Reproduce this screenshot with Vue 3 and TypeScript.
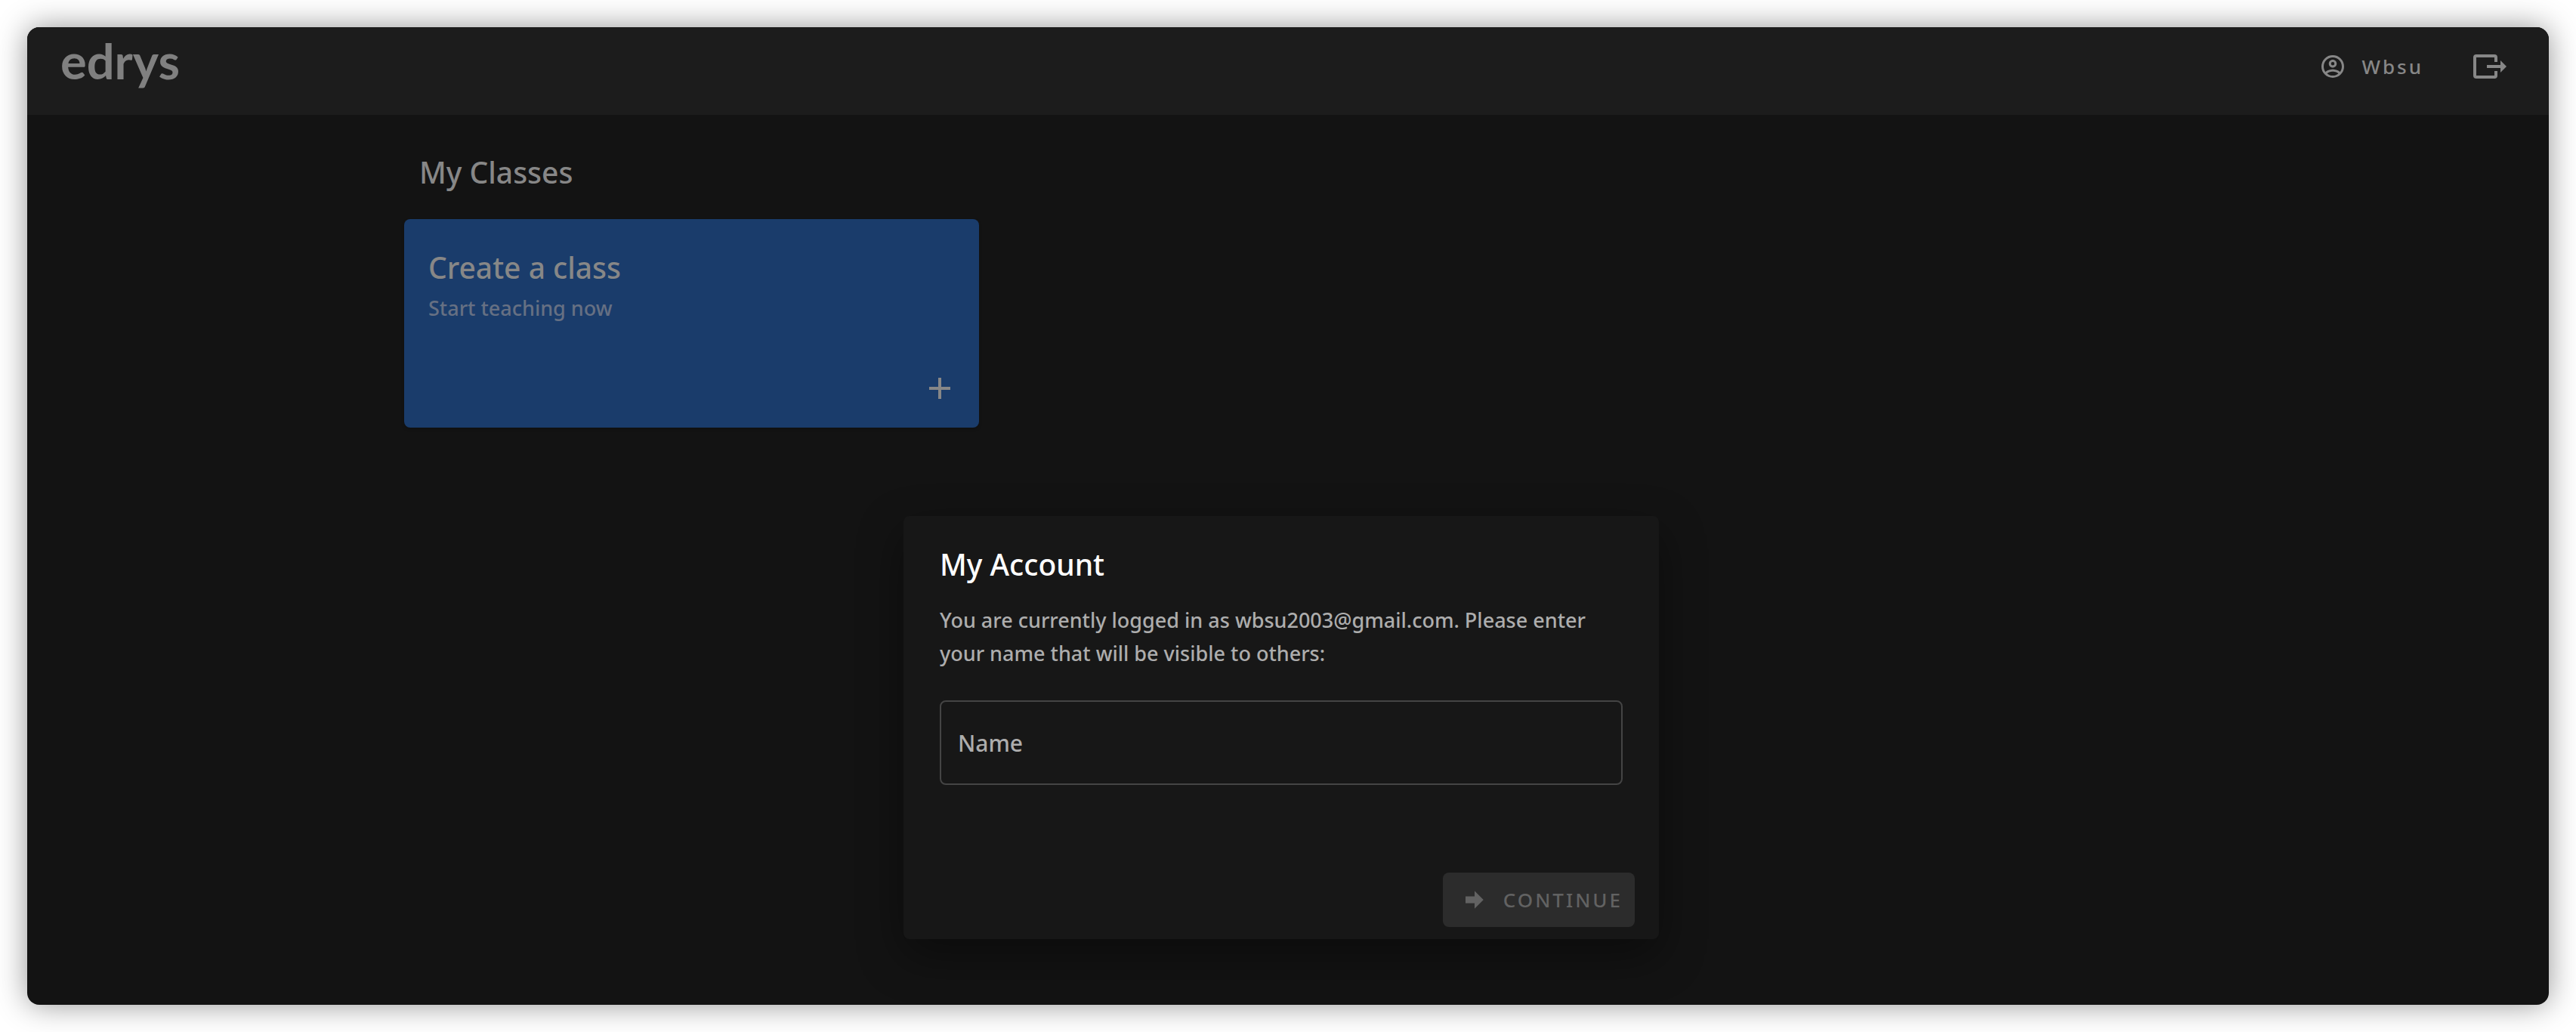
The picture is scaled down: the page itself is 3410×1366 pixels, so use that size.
<script setup lang="ts">
import { ref } from 'vue'

const user = 'Wbsu'
const email = 'wbsu2003@gmail.com'
const name = ref('')
</script>

<template>
  <div class="page">
    <div class="window">
      <header class="bar">
        <a class="logo" href="#">edrys</a>
        <nav class="actions">
          <button class="account" type="button">
            <svg class="icon-sm" viewBox="0 0 24 24" aria-hidden="true">
              <path d="M12,2A10,10 0 0,0 2,12A10,10 0 0,0 12,22A10,10 0 0,0 22,12A10,10 0 0,0 12,2M7.07,18.28C7.5,17.38 10.12,16.5 12,16.5C13.88,16.5 16.5,17.38 16.93,18.28C15.57,19.36 13.86,20 12,20C10.14,20 8.43,19.36 7.07,18.28M18.36,16.83C16.93,15.09 13.46,14.5 12,14.5C10.54,14.5 7.07,15.09 5.64,16.83C4.62,15.5 4,13.82 4,12C4,7.59 7.59,4 12,4C16.41,4 20,7.59 20,12C20,13.82 19.38,15.5 18.36,16.83M12,6C10.06,6 8.5,7.56 8.5,9.5C8.5,11.44 10.06,13 12,13C13.94,13 15.5,11.44 15.5,9.5C15.5,7.56 13.94,6 12,6M12,11A1.5,1.5 0 0,1 10.5,9.5A1.5,1.5 0 0,1 12,8A1.5,1.5 0 0,1 13.5,9.5A1.5,1.5 0 0,1 12,11Z" />
            </svg>
            <span>{{ user }}</span>
          </button>
          <button class="logout" type="button" aria-label="Log out">
            <svg class="icon-lg" viewBox="0 0 24 24" aria-hidden="true">
              <path d="M3,4H15A2,2 0 0,1 17,6V9H15V6H3V18H15V15H17V18A2,2 0 0,1 15,20H3A2,2 0 0,1 1,18V6A2,2 0 0,1 3,4M10,11H19V8L23,12L19,16V13H10V11Z" />
            </svg>
          </button>
        </nav>
      </header>

      <main class="content">
        <h1 class="heading">My Classes</h1>
        <div class="grid">
          <a class="card" href="#">
            <h2 class="card-title">Create a class</h2>
            <p class="card-sub">Start teaching now</p>
            <svg class="icon-lg plus" viewBox="0 0 24 24" aria-hidden="true">
              <path d="M19,13H13V19H11V13H5V11H11V5H13V11H19V13Z" />
            </svg>
          </a>
        </div>
      </main>

      <div class="overlay">
        <form class="dialog" role="dialog" aria-labelledby="dialog-title" @submit.prevent>
          <div class="dialog-body">
            <h2 id="dialog-title" class="dialog-title">My Account</h2>
            <p class="dialog-text">
              You are currently logged in as {{ email }}. Please enter your name that will be visible to others:
            </p>
            <input v-model="name" class="field" type="text" placeholder="Name" aria-label="Name" />
          </div>
          <div class="dialog-actions">
            <button class="continue" type="submit" :disabled="!name">
              <svg class="icon-sm" viewBox="0 0 24 24" aria-hidden="true">
                <path d="M4,15V9H12V4.16L19.84,12L12,19.84V15H4Z" />
              </svg>
              <span>CONTINUE</span>
            </button>
          </div>
        </form>
      </div>
    </div>
  </div>
</template>

<style>
body {
  margin: 0;
  background: #fff;
}
</style>

<style scoped>
.page {
  box-sizing: border-box;
  min-height: 100vh;
  padding: 36px;
  display: flex;
  font-family: "Noto Sans", sans-serif;
  font-weight: 500;
}

.window {
  position: relative;
  flex: 1;
  overflow: hidden;
  border-radius: 16px;
  background: #131313;
  box-shadow: 0 0 40px rgba(0, 0, 0, 0.42);
  color: #878787;
}

h1,
h2,
p {
  margin: 0;
}

button {
  padding: 0;
  border: 0;
  background: none;
  color: inherit;
  font: inherit;
}

a {
  color: inherit;
  text-decoration: none;
}

svg {
  display: block;
  fill: currentColor;
}

.icon-sm {
  width: 36px;
  height: 36px;
}

.icon-lg {
  width: 48px;
  height: 48px;
}

.bar {
  box-sizing: border-box;
  height: 116px;
  padding: 12px 54px 0 44px;
  display: flex;
  align-items: flex-start;
  justify-content: space-between;
  background: #1c1c1c;
}

.logo {
  color: #808080;
  font-family: Lato, sans-serif;
  font-size: 65px;
  font-weight: 700;
  line-height: 64px;
}

.actions {
  display: flex;
  gap: 64px;
  padding-top: 16px;
}

.account {
  display: flex;
  align-items: center;
  gap: 20px;
  font-size: 26px;
  line-height: 44px;
  letter-spacing: 3px;
}

.content {
  box-sizing: border-box;
  max-width: 2340px;
  margin: 0 auto;
  padding-top: 44px;
}

.heading {
  padding: 0 20px;
  font-size: 39px;
  font-weight: 500;
  line-height: 64px;
}

.grid {
  display: grid;
  grid-template-columns: repeat(3, 1fr);
  gap: 28px;
  margin-top: 30px;
}

.card {
  box-sizing: border-box;
  height: 276px;
  padding: 32px 28px 28px 32px;
  display: flex;
  flex-direction: column;
  border-radius: 8px;
  background: #1a3c6b;
  box-shadow: 0 2px 4px rgba(0, 0, 0, 0.2);
}

.card-title {
  font-size: 39px;
  font-weight: 500;
  line-height: 64px;
}

.card-sub {
  color: #667083;
  font-size: 27px;
  line-height: 44px;
}

.plus {
  margin-top: auto;
  align-self: flex-end;
}

.overlay {
  position: absolute;
  inset: 0;
  box-sizing: border-box;
  padding: 0 18px 87px 0;
  display: flex;
  align-items: flex-end;
  justify-content: center;
}

.dialog {
  width: 1000px;
  border-radius: 8px;
  background: #171717;
  box-shadow: 0 22px 60px rgba(0, 0, 0, 0.4);
}

.dialog-body {
  padding: 32px 48px 0;
}

.dialog-title {
  color: #fff;
  font-size: 39px;
  font-weight: 500;
  line-height: 64px;
}

.dialog-text {
  margin-top: 20px;
  color: #adadad;
  font-size: 27px;
  line-height: 44px;
}

.field {
  box-sizing: border-box;
  width: 100%;
  height: 112px;
  margin-top: 40px;
  padding: 0 22px;
  display: block;
  border: 2px solid #444;
  border-radius: 8px;
  outline: 0;
  background: transparent;
  color: #fff;
  font: 500 30px "Noto Sans", sans-serif;
}

.field::placeholder {
  color: #adadad;
  opacity: 1;
}

.dialog-actions {
  display: flex;
  justify-content: flex-end;
  padding: 116px 32px 16px;
}

.continue {
  height: 72px;
  padding: 0 16px 0 24px;
  display: flex;
  align-items: center;
  gap: 20px;
  border-radius: 8px;
  background: #2c2c2c;
  color: #626262;
  font-size: 26px;
  letter-spacing: 3px;
}
</style>
